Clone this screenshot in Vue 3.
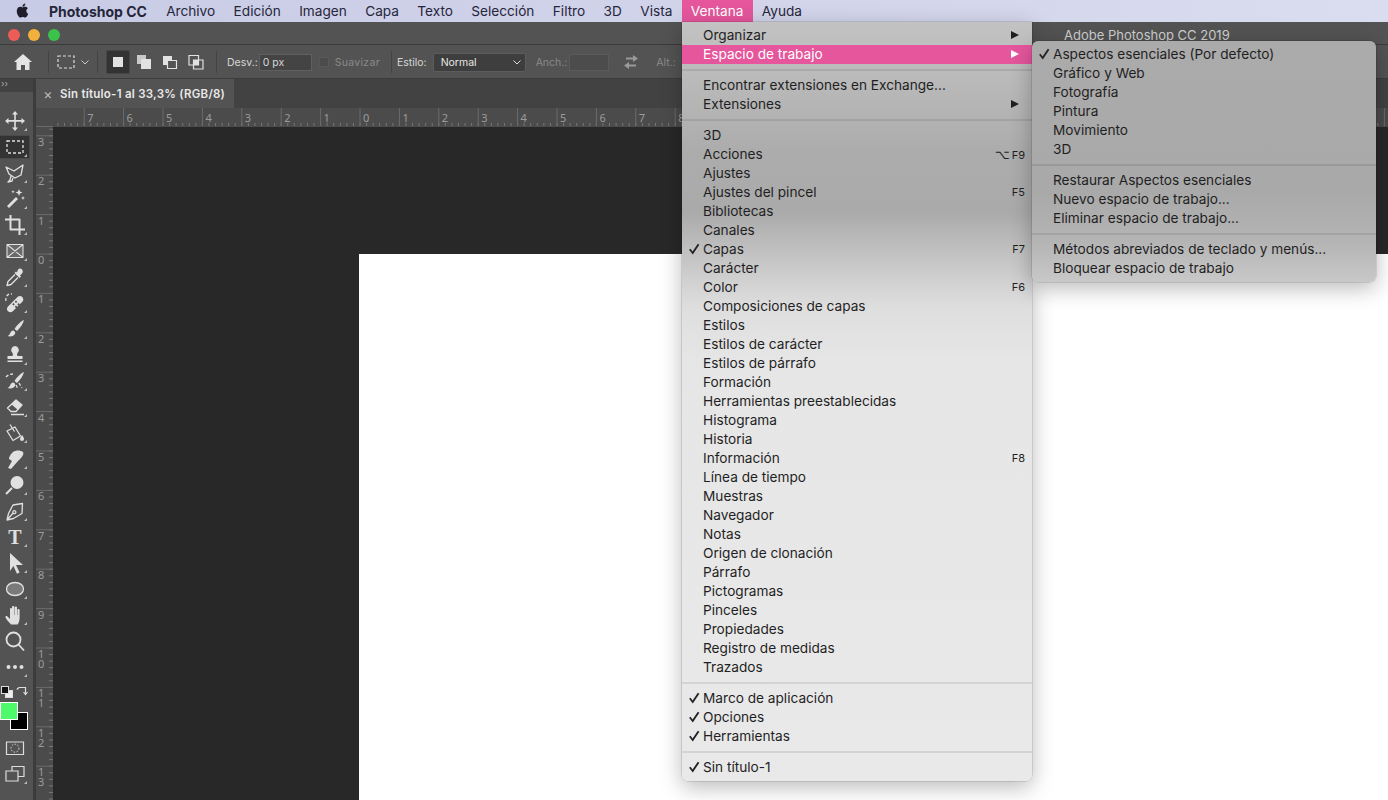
<script setup>
const mainMenu = [
  [{ t: 'Organizar', arrow: true }, { t: 'Espacio de trabajo', arrow: true, on: true }],
  [{ t: 'Encontrar extensiones en Exchange...' }, { t: 'Extensiones', arrow: true }],
  [
    { t: '3D' }, { t: 'Acciones', key: 'F9', alt: true }, { t: 'Ajustes' },
    { t: 'Ajustes del pincel', key: 'F5' }, { t: 'Bibliotecas' }, { t: 'Canales' },
    { t: 'Capas', key: 'F7', check: true }, { t: 'Carácter' }, { t: 'Color', key: 'F6' },
    { t: 'Composiciones de capas' }, { t: 'Estilos' }, { t: 'Estilos de carácter' },
    { t: 'Estilos de párrafo' }, { t: 'Formación' }, { t: 'Herramientas preestablecidas' },
    { t: 'Histograma' }, { t: 'Historia' }, { t: 'Información', key: 'F8' },
    { t: 'Línea de tiempo' }, { t: 'Muestras' }, { t: 'Navegador' }, { t: 'Notas' },
    { t: 'Origen de clonación' }, { t: 'Párrafo' }, { t: 'Pictogramas' }, { t: 'Pinceles' },
    { t: 'Propiedades' }, { t: 'Registro de medidas' }, { t: 'Trazados' }
  ],
  [{ t: 'Marco de aplicación', check: true }, { t: 'Opciones', check: true }, { t: 'Herramientas', check: true }],
  [{ t: 'Sin título-1', check: true }]
]

const subMenu = [
  [
    { t: 'Aspectos esenciales (Por defecto)', check: true }, { t: 'Gráfico y Web' },
    { t: 'Fotografía' }, { t: 'Pintura' }, { t: 'Movimiento' }, { t: '3D' }
  ],
  [{ t: 'Restaurar Aspectos esenciales' }, { t: 'Nuevo espacio de trabajo...' }, { t: 'Eliminar espacio de trabajo...' }],
  [{ t: 'Métodos abreviados de teclado y menús...' }, { t: 'Bloquear espacio de trabajo' }]
]

const menuBar = ['Archivo', 'Edición', 'Imagen', 'Capa', 'Texto', 'Selección', 'Filtro', '3D', 'Vista']

const brush = 'M20 2c-3 1-7 5-9.5 9l2.5 2c3-3 6-7 7-11zM9.5 12.5c-2 0-3 1.5-3.5 3-.3 1.2-1.2 2-2.5 2.5 2.5 1 6 .5 7.5-2 .5-1 .3-2.5-1.5-3.5z'

const tools = [
  { f: 'M11 1l3 3.5h-2.2V10h5.7V8l3.5 3-3.5 3v-2.2h-5.7v5.7H14L11 21l-3-3.5h2.2v-5.7H4.5V14L1 11l3.5-3v2h5.7V4.5H8z' },
  { d: 'M3 5h16v12H3z', active: true },
  { s: 'M2 5l8 4 9-6-2 10-6 3-6-4zM7 14l-1 4-2 2 4-1 1-3' },
  { f: 'M3 18l9-9 2 2-9 9zM15 1l1 2.5 2.5 1-2.5 1-1 2.5-1-2.5-2.5-1 2.5-1zM19 8l.6 1.4 1.4.6-1.4.6-.6 1.4-.6-1.4-1.4-.6 1.4-.6zM9 2l.5 1.2 1.2.5-1.2.5L9 5.400l-.5-1.200-1.200-.5 1.200-.5z' },
  { s: 'M6.500 1v14.500H21M1 5.500h14.500V21', w: 2 },
  { s: 'M3 4.500h16v13H3zM3 4.500l16 13M19 4.500l-16 13', fill: '#6a6a6a', w: 1.100 },
  { f: 'M14 3.500c1.200-1.200 3-1.200 4 0s1.200 3 0 4l-2 2 1 1-1.500 1.500-5-5L12 5.500l1 1z', s: 'M11 8.500l-7 7-1 4 4-1 7-7' },
  { f: 'M4 14.500L13.500 5c1.400-1.400 3.500-1.400 4.800 0s1.400 3.400 0 4.800L8.800 19.300c-1.400 1.400-3.400 1.400-4.800 0s-1.400-3.400 0-4.800zM9.500 11l1.300 1.300-1.300 1.300-1.300-1.300zM12 8.500l1.300 1.300-1.300 1.300-1.300-1.300zM12 13.500l1.300 1.300-1.300 1.300-1.300-1.300zM14.500 11l1.300 1.300-1.300 1.300-1.300-1.300z', d: 'M2 9C1 5 4 1 8 2' },
  { f: brush },
  { f: 'M11 2a4 4 0 0 1 2.500 7c-.5.5-.7 1.500 0 3h5v3H3.500v-3h5c.7-1.500.5-2.500 0-3A4 4 0 0 1 11 2zM3.500 16.500h15V18h-15z' },
  { f: brush, d: 'M2 7c2-2 4-3 7-3M15 13l3 5M12 15l2 4' },
  { f: 'M12 4l6 5-4.500 4.500-6-5z', s: 'M12 4l6 5-6 6.500H7L3.500 12zM7 18.500h13' },
  { s: 'M3 9l8-4 5.500 9-7.500 4.500zM6 2.500l4.500 7', f: 'M18 13c1.500 2 2 3 2 4a2 2 0 0 1-4 0c0-1 .8-2 2-4z' },
  { f: 'M9 4c3-2 7-2 10 0 1 1 0 4-2 6l-3 3-7 8-3-1 4-7-3-2c0-3 2-5 4-7z' },
  { f: 'M13 2a6.500 6.500 0 1 1 0 13 6.500 6.500 0 0 1 0-13z', s: 'M8 14l-6 6', w: 2 },
  { s: 'M18.500 3.500L9 5 4.500 13.500 3 20l6.500-1.500 8.500-5zM3 20l6.500-7.500M9 11.500a1.500 1.500 0 1 1 2 2 1.500 1.500 0 0 1-2-2z' },
  { letter: 'T' },
  { f: 'M6 1l13 12h-7l3.600 7.500-2.600 1.300-3.600-7.800L6 19z' },
  { s: 'M11 4.500c5 0 8.500 2.800 8.500 6.500s-3.500 6.500-8.500 6.500-8.500-2.800-8.500-6.500 3.500-6.500 8.500-6.500z', fill: '#7a7a7a' },
  { f: 'M7 20.500c-2-2-4.500-5-5.500-7-.5-1 1-2 2-1L6 15V5c0-1.500 2-1.500 2 0V3c0-1.500 2.300-1.500 2.300 0v8h.4V3.500c0-1.500 2.300-1.500 2.300 0V11h.4V6c0-1.200 2.200-1.200 2.200.2V14c0 3-1 5-2 6.500z' },
  { s: 'M9.500 2.500a7 7 0 1 1 0 14 7 7 0 0 1 0-14zM14.500 14.500L20 20.500', w: 1.800, plain: true },
  { f: 'M4.500 9a2 2 0 1 1 0 4 2 2 0 0 1 0-4zM11 9a2 2 0 1 1 0 4 2 2 0 0 1 0-4zM17.500 9a2 2 0 1 1 0 4 2 2 0 0 1 0-4z' }
]

// reglas: una división cada 39,4 px a partir del origen del documento
const step = 39.4
const hOrigin = 307
const hTicks = []
for (let i = -7; i <= 26; i++) {
  hTicks.push({ x: hOrigin + i * step, label: i <= 8 ? Math.abs(i) : '' })
}
const hMinor = []
for (let x = hOrigin - 8 * step; x < 1340; x += step / 6) hMinor.push(x)

const vOrigin = 127
const vTicks = []
for (let i = -3; i <= 13; i++) {
  vTicks.push({ y: vOrigin + i * step, label: String(Math.abs(i)).split('') })
}
const vMinor = []
for (let y = vOrigin - 4 * step; y < 680; y += step / 6) vMinor.push(y)
</script>

<template>
  <div class="screen">
    <header class="menubar">
      <svg class="apple" viewBox="0 0 24 24" width="17" height="17"><path fill="#1d1d2b" d="M18.710 19.500c-.83 1.240-1.710 2.450-3.050 2.470-1.340.03-1.770-.79-3.290-.79-1.530 0-2 .77-3.270.82-1.310.05-2.300-1.320-3.140-2.530C4.250 17 2.940 12.450 4.700 9.390c.87-1.520 2.430-2.480 4.120-2.510 1.280-.02 2.500.87 3.290.87.78 0 2.260-1.070 3.810-.91.65.03 2.470.26 3.640 1.980-.09.06-2.170 1.280-2.150 3.810.03 3.020 2.650 4.030 2.680 4.040-.03.07-.42 1.440-1.380 2.830M13 3.500c.73-.83 1.940-1.460 2.940-1.500.13 1.170-.34 2.350-1.040 3.190-.69.85-1.830 1.510-2.950 1.420-.15-1.150.41-2.350 1.050-3.110z"/></svg>
      <span class="app-name">Photoshop CC</span>
      <span v-for="m in menuBar" :key="m" class="bar-item">{{ m }}</span>
      <span class="bar-item open">Ventana</span>
      <span class="bar-item">Ayuda</span>
    </header>

    <div class="titlebar">
      <i class="light red"></i><i class="light yellow"></i><i class="light green"></i>
      <span class="app-title">Adobe Photoshop CC 2019</span>
    </div>

    <div class="options">
      <svg class="home" viewBox="0 0 18 16" width="18" height="16"><path fill="#e4e4e4" d="M9 0l9 8h-2.500v8H11v-5H7v5H2.500V8H0z"/></svg>
      <i class="sep s1"></i>
      <svg class="rect-tool" viewBox="0 0 18 14" width="18" height="14"><path fill="none" stroke="#ddd" stroke-width="1.200" stroke-dasharray="3 2" d="M1 1h16v12H1z"/></svg>
      <svg class="chev" viewBox="0 0 8 5" width="8" height="5"><path fill="none" stroke="#ccc" d="M.5.5L4 4 7.500.5"/></svg>
      <i class="sep s2"></i>
      <span class="mode-on"><i></i></span>
      <svg class="mode" viewBox="0 0 16 16" width="16" height="16"><path fill="#c9c9c9" d="M1 1h9v9H1z"/><path fill="#e2e2e2" d="M5 5h10v10H5z"/></svg>
      <svg class="mode m2" viewBox="0 0 16 16" width="16" height="16"><path fill="#e2e2e2" d="M1 2h9v9H1z"/><path fill="#535353" stroke="#e2e2e2" stroke-width="1.200" d="M5.500 6.500h9v8h-9z"/></svg>
      <svg class="mode m2" viewBox="0 0 16 16" width="16" height="16"><path fill="none" stroke="#e2e2e2" stroke-width="1.200" d="M1 1.500h9.500v9.500H1zM5.500 6h9.500v9H5.500z"/><path fill="#e2e2e2" d="M5.500 6h5v5h-5z"/></svg>
      <i class="sep s3"></i>
      <span class="opt-label desv">Desv.:</span>
      <span class="opt-input w-desv">0 px</span>
      <i class="checkbox"></i>
      <span class="opt-label dim suav">Suavizar</span>
      <i class="sep s4"></i>
      <span class="opt-label estilo">Estilo:</span>
      <span class="opt-select">Normal
        <svg viewBox="0 0 8 5" width="8" height="5"><path fill="none" stroke="#ddd" d="M.5.5L4 4 7.500.5"/></svg>
      </span>
      <span class="opt-label dim anch">Anch.:</span>
      <span class="opt-input blank"></span>
      <svg class="swap" viewBox="0 0 16 14" width="16" height="14"><path fill="#9a9a9a" d="M10 0l5 3.500L10 7V4.500H3v-2h7zM6 7v2.500h7v2H6V14L1 10.500z"/></svg>
      <span class="opt-label dim alt">Alt.:</span>
    </div>

    <div class="body">
      <aside class="toolbar">
        <div class="collapse">››</div>
        <div class="grip"></div>
        <div v-for="(tool, i) in tools" :key="i" class="tool" :class="{ active: tool.active }">
          <span v-if="tool.letter" class="tool-letter">{{ tool.letter }}</span>
          <svg v-else viewBox="0 0 22 22" width="22" height="22">
            <path v-if="tool.s" :d="tool.s" :fill="tool.fill || 'none'" stroke="#e0e0e0" :stroke-width="tool.w || 1.300" stroke-linejoin="round" />
            <path v-if="tool.d" :d="tool.d" fill="none" stroke="#e0e0e0" stroke-width="1.300" stroke-dasharray="3 2" />
            <path v-if="tool.f" :d="tool.f" fill="#e0e0e0" fill-rule="evenodd" />
          </svg>
          <i v-if="!tool.plain" class="corner"></i>
        </div>
        <div class="colors">
          <span class="mini-bg"></span>
          <span class="mini-fg"></span>
          <svg class="color-swap" viewBox="0 0 12 12" width="12" height="12"><path fill="none" stroke="#ddd" stroke-width="1.200" d="M3 2.500h6.500V9M.8 4.500L3 2.500 3 2.500M7.500 7L9.500 9.500 11.500 7"/></svg>
          <span class="swatch back"></span>
          <span class="swatch front"></span>
        </div>
        <div class="tool">
          <svg viewBox="0 0 22 22" width="22" height="22"><path fill="none" stroke="#ddd" stroke-width="1.200" d="M2.500 5h17v12.500h-17z"/><circle cx="11" cy="11.200" r="4" fill="none" stroke="#ddd" stroke-dasharray="1.500 1.500"/></svg>
        </div>
        <div class="tool">
          <svg viewBox="0 0 22 22" width="22" height="22"><path fill="#535353" stroke="#ddd" stroke-width="1.200" d="M8 3.500h12v10H8z"/><path fill="#535353" stroke="#ddd" stroke-width="1.200" d="M2 8h12v10H2z"/></svg>
          <i class="corner"></i>
        </div>
      </aside>

      <div class="docs">
        <div class="tabs">
          <div class="tab"><span class="tab-x">×</span><span class="tab-name">Sin título-1 al 33,3% (RGB/8)</span></div>
        </div>
        <div class="hrow">
          <div class="ruler-corner"></div>
          <svg class="hruler" width="1335" height="19">
            <line v-for="(x, i) in hMinor" :key="i" :x1="x" :x2="x" y1="15" y2="18" stroke="#777" />
            <g v-for="t in hTicks" :key="t.x + 'h'">
              <line :x1="t.x" :x2="t.x" y1="0" y2="18" stroke="#6b6b6b" />
              <text v-if="t.label !== ''" :x="t.x + 3" y="14" class="rule-num">{{ t.label }}</text>
            </g>
          </svg>
        </div>
        <div class="work">
          <svg class="vruler" width="17" height="673">
            <line v-for="(y, i) in vMinor" :key="i" :y1="y" :y2="y" x1="13" x2="17" stroke="#777" />
            <g v-for="t in vTicks" :key="t.y + 'v'">
              <line :y1="t.y" :y2="t.y" x1="0" x2="17" stroke="#6b6b6b" />
              <text v-for="(c, j) in t.label" :key="j" x="2" :y="t.y + 10 + j * 10" class="rule-num">{{ c }}</text>
            </g>
          </svg>
          <div class="canvas"><div class="page"></div></div>
        </div>
      </div>
    </div>

    <div class="dropdown main-menu">
      <template v-for="(group, g) in mainMenu" :key="g">
        <i v-if="g" class="divider"></i>
        <div v-for="item in group" :key="item.t" class="row" :class="{ hot: item.on }">
          <svg v-if="item.check" class="tick" viewBox="0 0 11 11" width="12" height="12"><path fill="#222" d="M1 6.200l1.300-1 1.900 2.600L9 .6l1.400.9-6 9.100z"/></svg>
          <span class="row-text">{{ item.t }}</span>
          <i v-if="item.arrow" class="arrow"></i>
          <span v-if="item.key" class="key"><span v-if="item.alt" class="alt-key">⌥</span>{{ item.key }}</span>
        </div>
      </template>
    </div>

    <div class="dropdown sub-menu">
      <template v-for="(group, g) in subMenu" :key="g">
        <i v-if="g" class="divider"></i>
        <div v-for="item in group" :key="item.t" class="row">
          <svg v-if="item.check" class="tick" viewBox="0 0 11 11" width="12" height="12"><path fill="#222" d="M1 6.200l1.300-1 1.900 2.600L9 .6l1.400.9-6 9.100z"/></svg>
          <span class="row-text">{{ item.t }}</span>
        </div>
      </template>
    </div>
  </div>
</template>

<style>
html, body {
  margin: 0;
  background: #282828;
}
</style>

<style scoped>
.screen {
  position: relative;
  width: 1388px;
  height: 800px;
  overflow: hidden;
  display: flex;
  flex-direction: column;
  font-family: Inter, "Noto Sans", sans-serif;
  background: #282828;
}

/* barra de menús */
.menubar {
  height: 22px;
  flex: none;
  display: flex;
  align-items: center;
  background: linear-gradient(90deg, #c8cbe5, #dadcef);
  color: #26263a;
  font-size: 13.650px;
}
.apple {
  margin: -2px 0 0 14px;
}
.app-name {
  margin: 0 10px 0 18px;
  font-size: 14px;
  font-weight: 700;
}
.bar-item {
  height: 22px;
  line-height: 22px;
  padding: 0 9.200px;
}
.bar-item.open {
  background: #e5569c;
  color: #fff;
}

.titlebar {
  height: 19px;
  padding-top: 3px;
  flex: none;
  display: flex;
  align-items: center;
  padding-left: 4px;
  background: #535353;
  border-bottom: 1px solid #3b3b3b;
}
.light {
  width: 12px;
  height: 12px;
  border-radius: 50%;
  margin: 0 4px;
}
.red { background: #ee5c58; }
.yellow { background: #f1b13c; }
.green { background: #3cc24b; }
.app-title {
  margin-left: 1000px;
  color: #cfcfcf;
  font-size: 13px;
}

/* barra de opciones */
.options {
  height: 32px;
  padding-top: 1px;
  flex: none;
  display: flex;
  align-items: center;
  background: #535353;
  border-bottom: 1px solid #3c3c3c;
  color: #d6d6d6;
  font-size: 10.500px;
  white-space: nowrap;
}
.home { margin-left: 14px; }
.sep {
  width: 1px;
  height: 22px;
  background: #444;
}
.s1 { margin-left: 16px; }
.rect-tool { margin-left: 8px; }
.chev { margin-left: 6px; }
.s2 { margin-left: 8px; }
.mode-on {
  width: 24px;
  height: 24px;
  margin-left: 8px;
  background: #333;
  border: 1px solid #444;
  border-radius: 2px;
  box-sizing: border-box;
  display: flex;
  align-items: center;
  justify-content: center;
}
.mode-on i {
  width: 10px;
  height: 10px;
  background: #e2e2e2;
}
.mode { margin-left: 6px; }
.m2 { margin-left: 10px; }
.s3 { margin-left: 12px; }
.desv { margin-left: 10px; }
.opt-input {
  height: 17px;
  box-sizing: border-box;
  padding-left: 3px;
  background: #444;
  border: 1px solid #5f5f5f;
  line-height: 15px;
}
.w-desv {
  width: 53px;
  margin-left: 1px;
}
.checkbox {
  width: 8px;
  height: 8px;
  margin-left: 7px;
  background: #4c4c4c;
  border: 1px solid #585858;
}
.dim { color: #8a8a8a; }
.suav {
  margin-left: 6px;
  letter-spacing: .3px;
}
.s4 { margin-left: 11px; }
.estilo { margin-left: 5px; }
.opt-select {
  width: 93px;
  height: 19px;
  margin-left: 6px;
  padding: 0 4px 0 7px;
  box-sizing: border-box;
  display: flex;
  align-items: center;
  justify-content: space-between;
  background: #3e3e3e;
  border: 1px solid #5c5c5c;
  border-radius: 2px;
  color: #e6e6e6;
}
.anch { margin-left: 10px; }
.blank {
  width: 40px;
  margin-left: 2px;
  background: #4c4c4c;
  border-color: #5a5a5a;
}
.swap { margin-left: 14px; }
.alt { margin-left: 17px; }

.body {
  flex: 1;
  min-height: 0;
  display: flex;
}

/* herramientas */
.toolbar {
  width: 33px;
  flex: none;
  background: #535353;
  border-right: 3px solid #3c3c3c;
}
.collapse {
  height: 13px;
  line-height: 10px;
  padding-left: 1px;
  background: #424242;
  color: #aaa;
  font-size: 9px;
}
.grip {
  height: 16px;
}
.tool {
  position: relative;
  width: 30px;
  height: 26px;
  box-sizing: border-box;
  padding-left: 4px;
  display: flex;
  align-items: center;
}
.tool.active::before {
  content: "";
  position: absolute;
  left: 0;
  top: 1px;
  width: 30px;
  height: 24px;
  background: #333;
  border: 1px solid #4a4a4a;
  border-left: 0;
  border-radius: 0 2px 2px 0;
  box-sizing: border-box;
}
.tool svg {
  position: relative;
}
.tool-letter {
  width: 22px;
  text-align: center;
  color: #e0e0e0;
  font: 700 20px "Liberation Serif", serif;
}
.corner {
  position: absolute;
  right: 3px;
  bottom: 3px;
  border-style: solid;
  border-width: 0 0 3px 3px;
  border-color: transparent transparent #bbb transparent;
}
.colors {
  position: relative;
  height: 55px;
}
.mini-bg, .mini-fg {
  position: absolute;
  width: 6px;
  height: 6px;
  border: 1px solid #ddd;
}
.mini-bg { left: 5px; top: 10px; background: #eee; }
.mini-fg { left: 1px; top: 6px; background: #111; }
.color-swap {
  position: absolute;
  left: 16px;
  top: 5px;
}
.swatch {
  position: absolute;
  width: 16px;
  height: 16px;
  border: 1px solid #fff;
}
.back { left: 10px; top: 32px; background: #000; }
.front { left: 0; top: 22px; background: #4dfb6a; }

/* documento */
.docs {
  flex: 1;
  min-width: 0;
  display: flex;
  flex-direction: column;
}
.tabs {
  height: 29px;
  flex: none;
  background: #424242;
}
.tab {
  width: 198px;
  height: 29px;
  display: flex;
  align-items: center;
  background: #535353;
  color: #e8e8e8;
  font-size: 11.500px;
  letter-spacing: .25px;
  font-weight: 600;
  white-space: nowrap;
}
.tab-x {
  width: 24px;
  text-align: center;
  color: #bbb;
  font-weight: 400;
  font-size: 14px;
}
.hrow {
  height: 19px;
  flex: none;
  display: flex;
  background: #4b4b4b;
}
.ruler-corner {
  width: 17px;
  flex: none;
  border-bottom: 1px solid #6b6b6b;
  box-sizing: border-box;
}
.hruler {
  flex: none;
  display: block;
}
.rule-num {
  fill: #9c9c9c;
  font-size: 11px;
  font-family: "Noto Sans", sans-serif;
}
.work {
  flex: 1;
  min-height: 0;
  display: flex;
}
.vruler {
  flex: none;
  display: block;
  background: #4b4b4b;
}
.canvas {
  flex: 1;
  background: #282828;
  padding: 127px 0 0 306px;
}
.page {
  height: 100%;
  background: #fff;
}

/* menús desplegables */
.dropdown {
  position: absolute;
  box-sizing: border-box;
  padding: 4px 0;
  color: #1f1f1f;
  font-size: 13.650px;
  border-radius: 0 0 6px 6px;
}
.main-menu {
  left: 682px;
  top: 22px;
  width: 350px;
  height: 759px;
  background: linear-gradient(180deg, #c2c2c2 0, #bbb 50px, #acacac 130px, #aaa 190px, #c4c4c4 235px, #dedede 285px, #e6e6e6 340px, #e9e9e9 100%);
  box-shadow: 0 6px 22px rgba(0, 0, 0, .28), 0 0 0 .5px rgba(0, 0, 0, .2);
}
.sub-menu {
  left: 1032px;
  top: 41px;
  width: 344px;
  height: 241px;
  border-radius: 6px;
  background: linear-gradient(180deg, #ababab 0, #a9a9a9 150px, #b4b4b4 200px, #c8c8c8 100%);
  box-shadow: 0 6px 22px rgba(0, 0, 0, .28), 0 0 0 .5px rgba(0, 0, 0, .2);
}
.divider {
  display: block;
  height: 2px;
  margin: 5px 0;
  background: rgba(0, 0, 0, .09);
}
.row {
  position: relative;
  height: 19px;
  line-height: 19px;
  padding-left: 21px;
  white-space: nowrap;
}
.row.hot {
  background: #e5569c;
  color: #fff;
}
.tick {
  position: absolute;
  left: 6px;
  top: 3px;
}
.arrow {
  position: absolute;
  right: 13px;
  top: 5px;
  border-style: solid;
  border-width: 4.500px 0 4.500px 8px;
  border-color: transparent transparent transparent currentColor;
}
.key {
  position: absolute;
  right: 7px;
  top: 0;
  font-size: 11px;
}
.alt-key {
  margin-right: 2px;
  font-size: 13px;
  font-family: "DejaVu Sans", sans-serif;
}
</style>
